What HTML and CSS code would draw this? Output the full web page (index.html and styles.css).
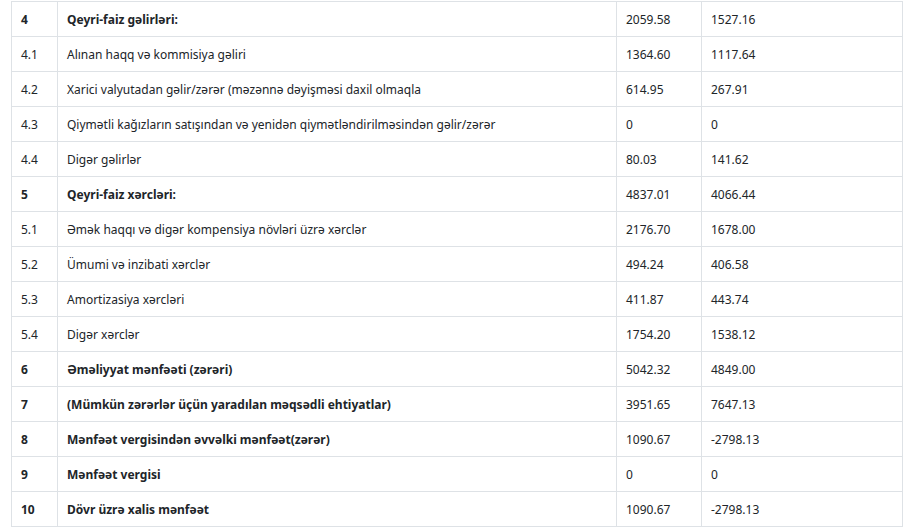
FILE: index.html
```html
<!DOCTYPE html>
<html lang="az">
<head>
<meta charset="utf-8">
<link rel="stylesheet" href="styles.css">
</head>
<body>
<div class="wrap">
<table class="report">
<colgroup>
<col class="c-no"><col class="c-name"><col class="c-v1"><col class="c-v2">
</colgroup>
<tbody>
<tr class="bold"><td>4</td><td>Qeyri-faiz gəlirləri:</td><td>2059.58</td><td>1527.16</td></tr>
<tr><td>4.1</td><td>Alınan haqq və kommisiya gəliri</td><td>1364.60</td><td>1117.64</td></tr>
<tr><td>4.2</td><td>Xarici valyutadan gəlir/zərər (məzənnə dəyişməsi daxil olmaqla</td><td>614.95</td><td>267.91</td></tr>
<tr><td>4.3</td><td>Qiymətli kağızların satışından və yenidən qiymətləndirilməsindən gəlir/zərər</td><td>0</td><td>0</td></tr>
<tr><td>4.4</td><td>Digər gəlirlər</td><td>80.03</td><td>141.62</td></tr>
<tr class="bold"><td>5</td><td>Qeyri-faiz xərcləri:</td><td>4837.01</td><td>4066.44</td></tr>
<tr><td>5.1</td><td>Əmək haqqı və digər kompensiya növləri üzrə xərclər</td><td>2176.70</td><td>1678.00</td></tr>
<tr><td>5.2</td><td>Ümumi və inzibati xərclər</td><td>494.24</td><td>406.58</td></tr>
<tr><td>5.3</td><td>Amortizasiya xərcləri</td><td>411.87</td><td>443.74</td></tr>
<tr><td>5.4</td><td>Digər xərclər</td><td>1754.20</td><td>1538.12</td></tr>
<tr class="bold"><td>6</td><td>Əməliyyat mənfəəti (zərəri)</td><td>5042.32</td><td>4849.00</td></tr>
<tr class="bold"><td>7</td><td>(Mümkün zərərlər üçün yaradılan məqsədli ehtiyatlar)</td><td>3951.65</td><td>7647.13</td></tr>
<tr class="bold"><td>8</td><td>Mənfəət vergisindən əvvəlki mənfəət(zərər)</td><td>1090.67</td><td>-2798.13</td></tr>
<tr class="bold"><td>9</td><td>Mənfəət vergisi</td><td>0</td><td>0</td></tr>
<tr class="bold"><td>10</td><td>Dövr üzrə xalis mənfəət</td><td>1090.67</td><td>-2798.13</td></tr>
</tbody>
</table>
</div>
</body>
</html>
```
FILE: styles.css
```css
html, body {
  margin: 0;
  padding: 0;
  background: #fff;
}
.wrap {
  padding: 1px 10px 0 11px;
}
.report {
  border-collapse: collapse;
  table-layout: fixed;
  width: 891px;
  font-family: "Noto Sans", "Open Sans", sans-serif;
  font-size: 12px;
  color: #212529;
}
.c-no { width: 46px; }
.c-name { width: 559px; }
.c-v1 { width: 85px; }
.c-v2 { width: 201px; }
.report td {
  border: 1px solid #dee2e6;
  height: 35px;
  padding: 1px 9px 0;
  box-sizing: border-box;
  vertical-align: middle;
  white-space: nowrap;
  line-height: 16px;
}
.report tr.bold td:nth-child(1),
.report tr.bold td:nth-child(2) {
  font-weight: bold;
}
```
